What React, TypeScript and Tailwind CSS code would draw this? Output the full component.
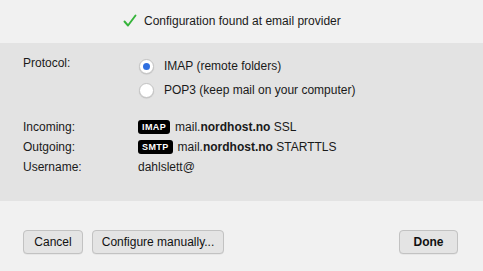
import React from "react";

const Badge = ({ label }: { label: string }) => (
  <span className="inline-flex h-[14px] items-center rounded-[3px] bg-black px-[4px] text-[9px] font-bold leading-none tracking-[0.4px] text-white">
    {label}
  </span>
);

const Radio = ({ checked }: { checked?: boolean }) => (
  <span className="flex h-[15px] w-[15px] items-center justify-center rounded-full border border-[#c4c4c4] bg-white shadow-[0_0.5px_1px_rgba(0,0,0,0.15)]">
    {checked && <span className="h-[7px] w-[7px] rounded-full bg-[#2f6fe0]" />}
  </span>
);

const Button = ({ children, bold, w }: { children: React.ReactNode; bold?: boolean; w: string }) => (
  <button
    className={`h-[24px] rounded-[4px] border border-[#c2c2c2] bg-[#e4e4e4] text-center text-[12px] text-[#111] shadow-[0_0.5px_0_rgba(0,0,0,0.08)] ${w} ${bold ? "font-bold" : ""}`}
  >
    {children}
  </button>
);

export default function App() {
  return (
    <div className="flex h-[271px] w-[483px] flex-col bg-[#f1f1f1] font-['Liberation_Sans','Helvetica',sans-serif] text-[12px] text-[#1a1a1a]">
      {/* status line */}
      <div className="flex h-[43px] items-center pl-[123px] pb-[1px]">
        <svg width="14" height="14" viewBox="0 0 14 14" className="mr-[7px]">
          <path d="M1.5 7.5 L5 11.5 L12.5 1.5" fill="none" stroke="#35b43a" strokeWidth="1.9" strokeLinecap="round" strokeLinejoin="round" />
        </svg>
        <span>Configuration found at email provider</span>
      </div>

      {/* details */}
      <div className="flex h-[158px] flex-col bg-[#e3e3e3] pl-[23px] pt-[10px]">
        <div className="flex">
          <span className="w-[116px] pt-[1px]">Protocol:</span>
          <div className="flex flex-col gap-[8px] pt-[5px]">
            <label className="flex h-[16px] items-center gap-[10px]">
              <Radio checked />
              <span>IMAP (remote folders)</span>
            </label>
            <label className="flex h-[16px] items-center gap-[10px]">
              <Radio />
              <span>POP3 (keep mail on your computer)</span>
            </label>
          </div>
        </div>

        <div className="mt-[21px] flex flex-col gap-[4px]">
          <div className="flex h-[16px] items-center">
            <span className="w-[115px]">Incoming:</span>
            <Badge label="IMAP" />
            <span className="ml-[5px]">
              mail.<b>nordhost.no</b> SSL
            </span>
          </div>
          <div className="flex h-[16px] items-center">
            <span className="w-[115px]">Outgoing:</span>
            <Badge label="SMTP" />
            <span className="ml-[5px]">
              mail.<b>nordhost.no</b> STARTTLS
            </span>
          </div>
          <div className="flex h-[16px] items-center">
            <span className="w-[115px]">Username:</span>
            <span>dahlslett@</span>
          </div>
        </div>
      </div>

      {/* actions */}
      <div className="flex items-center px-[23px] pt-[29px]">
        <div className="flex gap-[9px]">
          <Button w="w-[60px]">Cancel</Button>
          <Button w="w-[132px]">Configure manually...</Button>
        </div>
        <div className="ml-auto mr-[2px] flex">
          <Button bold w="w-[59px]">Done</Button>
        </div>
      </div>
    </div>
  );
}
